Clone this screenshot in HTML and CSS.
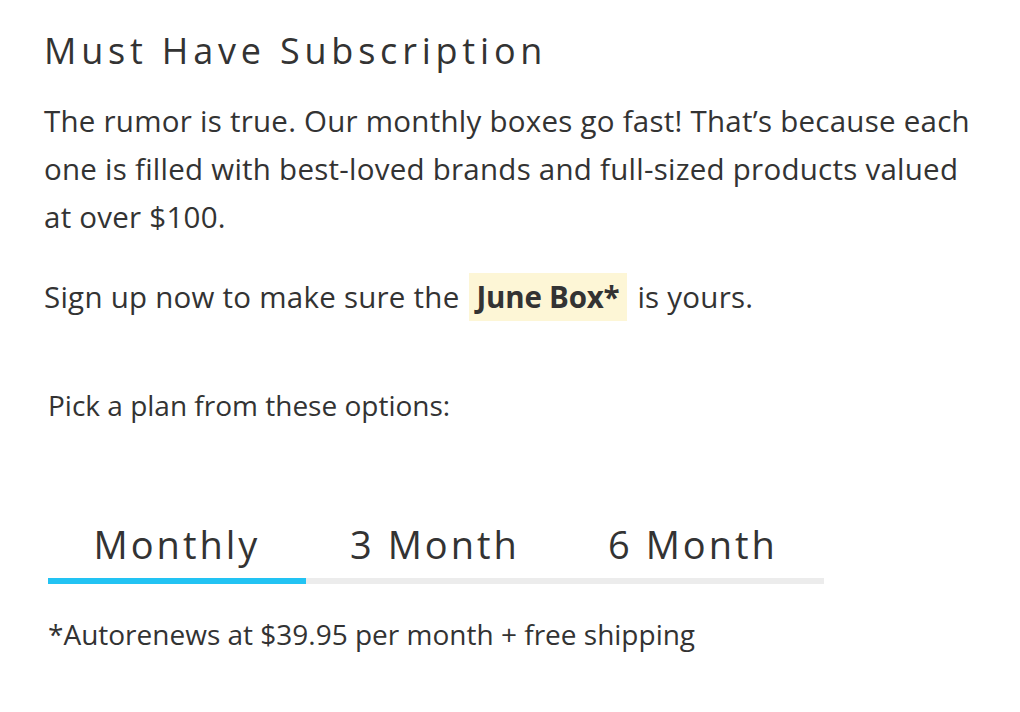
FILE: index.html
```html
<!DOCTYPE html>
<html lang="en">
<head>
    <meta charset="UTF-8">
    <title>Must Have Subscription</title>
    <link rel="stylesheet" href="styles.css">
</head>
<body>

<div class="page">
    <h2 class="title">Must Have Subscription</h2>
    <p class="intro">The rumor is true. Our monthly boxes go fast! That’s because each one is filled with best-loved brands and full-sized products valued at over $100.</p>
    <p class="intro">Sign up now to make sure the <span class="box-name">June Box*</span> is yours.</p>

    <div class="plans">
        <p class="pick">Pick a plan from these options:</p>
        <div class="tabs">
            <div class="tab active">Monthly</div>
            <div class="tab">3 Month</div>
            <div class="tab">6 Month</div>
        </div>
        <p class="note">*Autorenews at $39.95 per month + free shipping</p>
    </div>
</div>

</body>
</html>
```

FILE: styles.css
```css
body {
    margin: 0;
    background: #fff;
    color: #333;
    font-family: "Open Sans", Lato, sans-serif;
}
.page {
    width: 932px;
    padding: 26px 0 0 44px;
}
.title {
    margin: 0;
    font-size: 36px;
    font-weight: 400;
    letter-spacing: 4.8px;
    line-height: 50px;
}
.intro {
    margin: 21px 0 0;
    font-size: 29.5px;
    letter-spacing: 0.25px;
    line-height: 48px;
}
.intro + .intro {
    margin-top: 32px;
}
.box-name {
    display: inline-block;
    background: #fdf6d6;
    font-weight: bold;
    letter-spacing: -0.2px;
    padding: 0 7px;
    margin: 0 3px 0 2px;
}
.plans {
    padding-left: 4px;
}
.pick {
    margin: 64px 0 0;
    font-size: 28px;
    line-height: 40px;
}
.tabs {
    display: flex;
    width: 776px;
    margin-top: 97px;
    border-bottom: 6px solid #ececec;
}
.tab {
    width: 258px;
    text-align: center;
    font-size: 38px;
    letter-spacing: 3px;
    line-height: 44px;
    padding-bottom: 12px;
    margin-bottom: -6px;
    border-bottom: 6px solid transparent;
}
.tab.active {
    border-bottom-color: #22c3f3;
}
.note {
    margin: 30px 0 0;
    font-size: 28px;
    line-height: 40px;
}
```
